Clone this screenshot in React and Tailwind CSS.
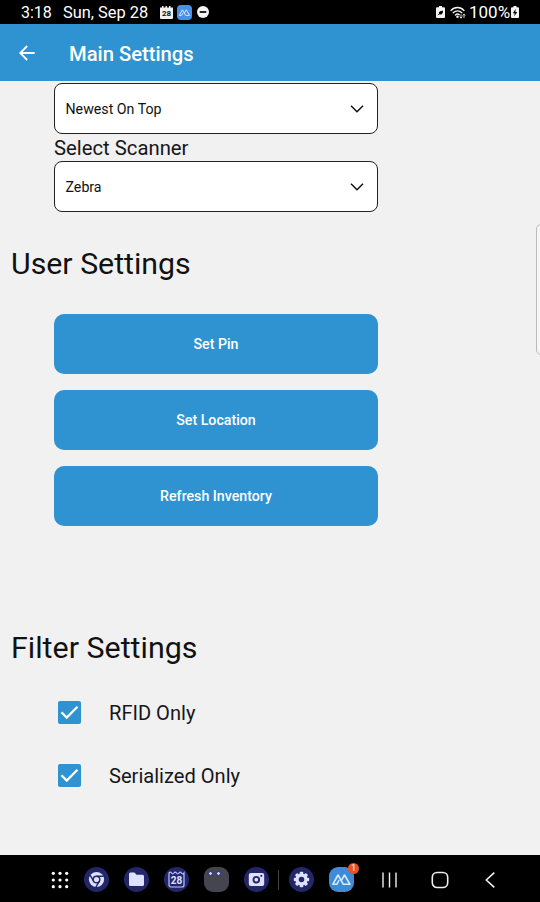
const PeaksLogo = ({ className }) => (
  <svg viewBox="0 0 25 25" className={className} fill="none" stroke="#d5ecff" strokeWidth="1.600" strokeLinejoin="round" strokeLinecap="round">
    <path d="M9.800 13.500 7.800 17.300H3.800L9 8l5.400 9.300H21L15.500 8l-2.700 4.700" />
  </svg>
)

const StatusBar = () => (
  <div className="flex h-6 shrink-0 items-center bg-black pl-[21px] pr-5 text-[17px] leading-6 text-white">
    <span className="mt-px w-[42px] whitespace-nowrap text-[16px]">3:18</span>
    <span className="mt-px w-[97px] whitespace-nowrap text-[16.400px]">Sun, Sep 28</span>
    <svg viewBox="0 0 13 13" className="h-[13px] w-[13px]">
      <path d="M0 1.500h2V0h1.500v1.500h2V0H7v1.500h2V0h1.500v1.500H13V12a1 1 0 0 1-1 1H1a1 1 0 0 1-1-1z" fill="#f1f1f1" />
      <text x="6.500" y="10.200" textAnchor="middle" fontSize="8" fontWeight="700" fill="#111">28</text>
    </svg>
    <div className="ml-1 h-[15px] w-[15px] rounded-[4px] bg-[#4a90e8]">
      <PeaksLogo className="h-[15px] w-[15px]" />
    </div>
    <svg viewBox="0 0 12 12" className="ml-[5px] h-3 w-3">
      <circle cx="6" cy="6" r="6" fill="#f4f4f4" />
      <path d="M2.700 6h6.600" stroke="#000" strokeWidth="1.700" />
    </svg>
    <div className="ml-auto flex items-center">
      <svg viewBox="0 0 9 12" className="h-3 w-[9px]">
        <path d="M3 0h3v1.300h2a1 1 0 0 1 1 1V11a1 1 0 0 1-1 1H1a1 1 0 0 1-1-1V2.300a1 1 0 0 1 1-1h2z" fill="#f4f4f4" />
        <path d="M3.200 7.900C2.200 6 4 5 7 4.800 7 8 5 9.200 3.200 7.900z" fill="#000" />
        <path d="M1.800 9 5.300 6.400" stroke="#000" strokeWidth=".8" />
      </svg>
      <svg viewBox="0 0 16 13" className="ml-[5px] h-[13px] w-4" fill="none" stroke="#f4f4f4" strokeWidth="1.300" strokeLinecap="round">
        <path d="M1 4.500C4.500.5 10.500.5 14 4.500M3.200 6.800c2.400-2.600 6.200-2.600 8.600 0M5.400 9c1.200-1.200 2.700-1.300 4-.3" />
        <circle cx="7.500" cy="10.700" r=".6" fill="#f4f4f4" />
        <path d="M11 8.700v3.300m-1-1 1 1 1-1M14 11.500V8.200m-1 1 1-1 1 1" strokeWidth=".9" />
      </svg>
      <span className="ml-[3px] w-[42px] whitespace-nowrap">100%</span>
      <svg viewBox="0 0 8 12" className="mr-px h-3 w-2">
        <path d="M2.500 0h3v1.300H7a1 1 0 0 1 1 1V11a1 1 0 0 1-1 1H1a1 1 0 0 1-1-1V2.300a1 1 0 0 1 1-1h1.500z" fill="#f4f4f4" />
        <path d="M4.700 2.800 1.800 7.200h1.900l-.5 3.400 3-4.700H4.300z" fill="#000" />
      </svg>
    </div>
  </div>
)

const Header = () => (
  <header className="flex h-[57px] shrink-0 items-center bg-[#2e93d0] pl-[19px] text-white">
    <svg viewBox="0 0 16 16" className="mt-px h-4 w-4" fill="none" stroke="currentColor" strokeWidth="1.800">
      <path d="M15.700 8H1.300M8.200 1 1.200 8l7 7" />
    </svg>
    <h1 className="ml-[34px] mt-[3px] whitespace-nowrap text-[20.200px] font-medium">Main Settings</h1>
  </header>
)

const Select = ({ value }) => (
  <button type="button" className="flex h-[51px] w-[324px] items-center justify-between rounded-[8px] border-[1.500px] border-[#222] bg-white pl-[10.500px] pr-[13px] text-[14.200px] text-[#111]">
    <span className="mt-[2px]">{value}</span>
    <svg viewBox="0 0 14 8" className="h-2 w-[14px]" fill="none" stroke="#111" strokeWidth="1.500">
      <path d="m1 .8 6 6 6-6" />
    </svg>
  </button>
)

const ActionButton = ({ children }) => (
  <button type="button" className="h-[60px] w-[324px] rounded-[10px] bg-[#2e93d0] pt-[2px] text-[14.200px] font-medium text-white">
    {children}
  </button>
)

const CheckRow = ({ label }) => (
  <label className="flex h-[63px] items-center">
    <span className="mt-px flex h-[23px] w-[23px] items-center justify-center rounded-[2px] bg-[#2e93d0]">
      <svg viewBox="0 0 23 23" className="h-[23px] w-[23px]" fill="none" stroke="#fff" strokeWidth="2.300">
        <path d="m3.500 11.300 5.200 5.200L19.500 5.700" />
      </svg>
    </span>
    <span className="ml-7 mt-[3px] whitespace-nowrap text-[20.100px] text-[#16161a]">{label}</span>
  </label>
)

const AppIcon = ({ children }) => (
  <div className="h-[25px] w-[25px] rounded-full bg-[#232668]">
    <svg viewBox="0 0 25 25" className="h-[25px] w-[25px]">
      {children}
    </svg>
  </div>
)

const teeth = [0, 45, 90, 135, 180, 225, 270, 315]

const Taskbar = () => (
  <nav className="flex h-[47px] shrink-0 items-center bg-black pl-[51px] pt-[2px]">
    <svg viewBox="0 0 18 18" className="h-[18px] w-[18px]" fill="#fff">
      {[2.300, 9, 15.700].map((y) => [2.300, 9, 15.700].map((x) => <circle key={`${x}-${y}`} cx={x} cy={y} r="1.600" />))}
    </svg>
    <div className="ml-[15px] flex items-center gap-[15px]">
      <AppIcon>
        <circle cx="12.500" cy="12.500" r="7.600" fill="#dfe2ff" />
        <circle cx="12.500" cy="12.500" r="3.300" fill="#dfe2ff" stroke="#232668" strokeWidth="1.400" />
        <path d="M12.500 9.200h7M9.600 14.200 6.100 8.200M15.400 14.200l-3.500 6" stroke="#232668" strokeWidth="1.400" />
      </AppIcon>
      <AppIcon>
        <path d="M5 7a1.500 1.500 0 0 1 1.500-1.500h4l2 2.200h6A1.500 1.500 0 0 1 20 9.200v8.300a1.500 1.500 0 0 1-1.500 1.500h-12A1.500 1.500 0 0 1 5 17.500z" fill="#dfe2ff" />
      </AppIcon>
      <AppIcon>
        <path d="M5 6q1.250-1.800 2.500 0t2.500 0 2.500 0 2.500 0 2.500 0 2.500 0V18a2 2 0 0 1-2 2H7a2 2 0 0 1-2-2z" fill="none" stroke="#bfc6ff" strokeWidth="1.200" />
        <text x="12.500" y="16.700" textAnchor="middle" fontSize="10" fontWeight="700" fill="#dfe2ff">28</text>
      </AppIcon>
      <div className="flex h-[25px] w-[25px] gap-[3px] rounded-[9px] bg-[#45454f] pl-[4px] pt-[4px]">
        <span className="h-[5px] w-[5px] rounded-full border-[1.500px] border-[#292b78] bg-[#c5cbff]" />
        <span className="h-[5px] w-[5px] rounded-full border-[1.500px] border-[#292b78] bg-[#c5cbff]" />
      </div>
      <AppIcon>
        <rect x="4.800" y="6" width="15.400" height="13" rx="2" fill="#dfe2ff" />
        <circle cx="12.300" cy="12.700" r="2.800" fill="none" stroke="#232668" strokeWidth="1.900" />
        <circle cx="17.300" cy="8.800" r="1.100" fill="#232668" />
      </AppIcon>
    </div>
    <div className="ml-[9px] h-5 w-px bg-[#444]" />
    <div className="ml-[10px] flex items-center gap-[15px]">
      <AppIcon>
        {teeth.map((a) => (
          <rect key={a} x="10.700" y="4.800" width="3.600" height="4" rx="1" fill="#dfe2ff" transform={`rotate(${a} 12.500 12.500)`} />
        ))}
        <circle cx="12.500" cy="12.500" r="4.400" fill="none" stroke="#dfe2ff" strokeWidth="3.200" />
      </AppIcon>
      <div className="relative h-[25px] w-[25px] rounded-[9px] bg-[#3e8bd8]">
        <PeaksLogo className="h-[25px] w-[25px]" />
        <span className="absolute -right-[5px] -top-1 h-[11px] w-[11px] rounded-full bg-[#e4532f] text-center text-[9px] leading-[11px] text-white">1</span>
      </div>
    </div>
    <svg viewBox="0 0 15 16" className="ml-[28px] h-4 w-[15px]" stroke="#eee" strokeWidth="1.400">
      <path d="M1 .5v15M7.500.5v15M14 .5v15" />
    </svg>
    <svg viewBox="0 0 18 18" className="ml-[34px] h-[18px] w-[18px]" fill="none" stroke="#eee" strokeWidth="1.600">
      <rect x="1.300" y="1.500" width="15.400" height="15" rx="4.800" />
    </svg>
    <svg viewBox="0 0 10 16" className="ml-[36px] h-4 w-[10px]" fill="none" stroke="#eee" strokeWidth="1.600">
      <path d="M9.300.6 1.300 8l8 7.400" />
    </svg>
  </nav>
)

const App = () => (
  <div className="relative flex h-[902px] w-[540px] flex-col overflow-hidden bg-[#f1f1f1] font-['Roboto',sans-serif]">
    <StatusBar />
    <Header />
    <main className="flex-1 overflow-hidden pt-[2px]">
      <section className="pl-[54px]">
        <Select value="Newest On Top" />
        <p className="h-[27px] whitespace-nowrap text-[20.300px] leading-[29px] text-[#16161a]">Select Scanner</p>
        <Select value="Zebra" />
      </section>
      <h2 className="mt-[32px] h-10 whitespace-nowrap pl-[11px] text-[30.300px] leading-10 text-[#111]">User Settings</h2>
      <div className="mt-[30px] flex flex-col gap-4 pl-[54px]">
        <ActionButton>Set Pin</ActionButton>
        <ActionButton>Set Location</ActionButton>
        <ActionButton>Refresh Inventory</ActionButton>
      </div>
      <h2 className="mt-[102px] h-10 whitespace-nowrap pl-[11px] text-[30.400px] leading-10 text-[#111]">Filter Settings</h2>
      <div className="mt-[12px] pl-[58px]">
        <CheckRow label="RFID Only" />
        <CheckRow label="Serialized Only" />
      </div>
    </main>
    <Taskbar />
    <div className="absolute -right-2 top-[224px] h-[131px] w-3 rounded-[5px] border-[1.500px] border-[#bbb] bg-[#f5f5f5]" />
  </div>
)

export default App
